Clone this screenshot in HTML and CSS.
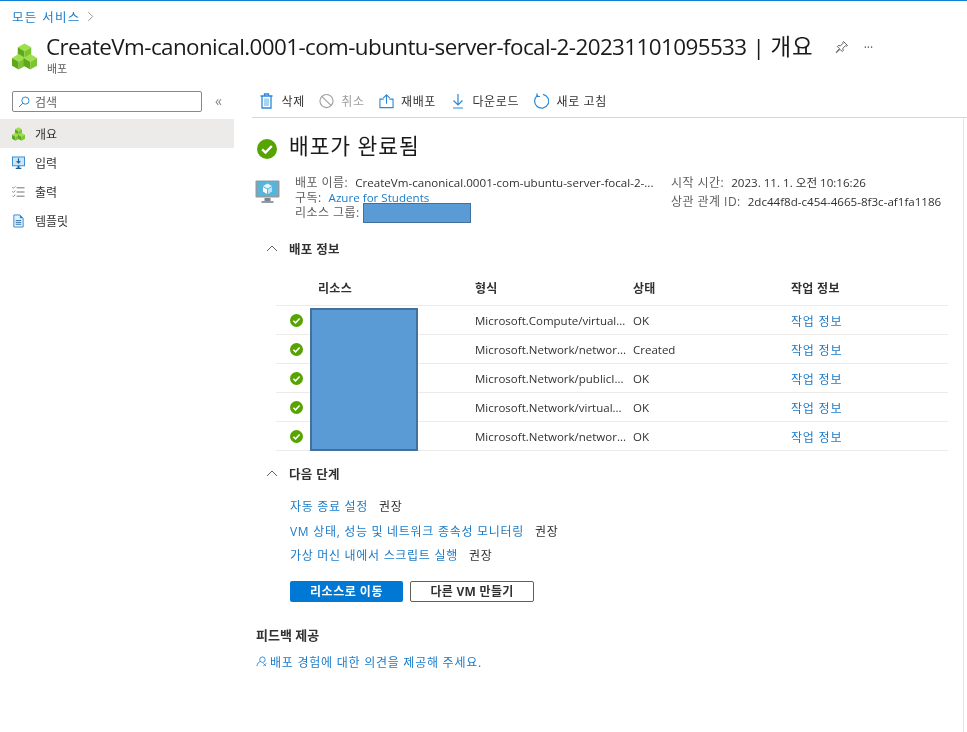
FILE: index.html
```html
<!DOCTYPE html>
<html lang="ko">
<head>
<meta charset="utf-8">
<title>배포 개요</title>
<link rel="stylesheet" href="styles.css">
</head>
<body>
<svg class="defs" width="0" height="0" aria-hidden="true">
  <defs>
    <g id="cube">
      <polygon points="7,0 14,4 7,8 0,4" fill="#9ee04a"/>
      <polygon points="0,4 7,8 7,16 0,12" fill="#5fa81c"/>
      <polygon points="14,4 7,8 7,16 14,12" fill="#7cc52f"/>
    </g>
    <g id="cubes">
      <use href="#cube" x="6"/>
      <use href="#cube" x="0" y="11"/>
      <use href="#cube" x="12" y="11"/>
    </g>
    <g id="ok">
      <circle cx="10" cy="10" r="10" fill="#57a300"/>
      <path d="M5.2 10.4l3.3 3.2 6.3-6.6" fill="none" stroke="#fff" stroke-width="2.4"/>
    </g>
  </defs>
</svg>
<div class="page">
  <header class="head">
    <nav class="crumbs"><a class="link">모든 서비스</a>
      <svg class="crumb-sep" viewBox="0 0 8 12"><path d="M1.5 1l5 5-5 5" fill="none" stroke="#8a8886"/></svg>
    </nav>
    <div class="titlebar">
      <svg class="title-icon" viewBox="0 0 26 27"><use href="#cubes"/></svg>
      <div class="title-text">
        <div class="title-row">
          <h1 class="title"><span class="title-name">CreateVm-canonical.0001-com-ubuntu-server-focal-2-20231101095533</span> | <span class="title-ko">개요</span></h1>
          <svg class="pin" viewBox="0 0 14 14"><path d="M8.5 1.5l4 4-1 .6-1-.4-2.6 2.6.3 2.2-1 1-2.200-2.200-3.300 3.300-.6-.2 3.300-3.800L2.300 6.500l1-1 2.200.3 2.600-2.600-.3-1z" fill="none" stroke="#605e5c"/></svg>
          <span class="more">···</span>
        </div>
        <div class="subtitle">배포</div>
      </div>
    </div>
  </header>
  <div class="shell">
    <aside class="side">
      <div class="search-row">
        <div class="search">
          <svg class="search-icon" viewBox="0 0 12 12"><circle cx="7.4" cy="4.6" r="3.6" fill="none" stroke="#2b88d8"/><path d="M4.8 7.2L1 11" stroke="#2b88d8"/></svg>
          <span>검색</span>
        </div>
        <span class="collapse">«</span>
      </div>
      <ul class="menu">
        <li class="menu-item active">
          <svg class="menu-icon" viewBox="0 0 26 27"><use href="#cubes"/></svg>개요</li>
        <li class="menu-item">
          <svg class="menu-icon" viewBox="0 0 14 14"><rect x="0.5" y="0.5" width="13" height="9.5" fill="#cde6f7" stroke="#2b88d8"/><path d="M7 2v5M5 5l2 2 2-2" fill="none" stroke="#1b5e95" stroke-width="1.2"/><path d="M6 10h2v2h2v1.5H4V12h2z" fill="#1b5e95"/></svg>입력</li>
        <li class="menu-item">
          <svg class="menu-icon" viewBox="0 0 14 14"><path d="M0.5 2l1 1 2-2M0.5 6.5l1 1 2-2M0.5 11l1 1 2-2" fill="none" stroke="#2b88d8"/><path d="M5 2.5h8.5M5 7h8.500M5 11.500h8.500" stroke="#6b6967"/></svg>출력</li>
        <li class="menu-item">
          <svg class="menu-icon" viewBox="0 0 14 14"><path d="M2 .5h6.500L12 4v9.500H2z" fill="#e3f1fb" stroke="#2b88d8"/><path d="M8.500.5V4H12z" fill="#2b88d8"/><path d="M4 6.500h6M4 8.500h6M4 10.500h6" stroke="#2b6ea8"/></svg>템플릿</li>
      </ul>
    </aside>
    <main class="main">
      <div class="toolbar">
        <span class="tool"><svg class="tool-icon" viewBox="0 0 14 16"><path d="M1 3h12M5 3V1h4v2M2.500 3v12h9V3" fill="none" stroke="#2b88d8" stroke-width="1.3"/><rect x="4.500" y="5.500" width="5" height="7.500" fill="#a9d3f2"/></svg>삭제</span>
        <span class="tool disabled"><svg class="tool-icon" viewBox="0 0 16 16"><circle cx="8" cy="8" r="7" fill="none" stroke="#a19f9d" stroke-width="1.2"/><path d="M3 3l10 10" stroke="#a19f9d" stroke-width="1.2"/></svg>취소</span>
        <span class="tool"><svg class="tool-icon" viewBox="0 0 16 16"><path d="M8 11V1.500M4.500 5L8 1.500 11.500 5" fill="none" stroke="#2b88d8" stroke-width="1.2"/><path d="M5 6H1v9h14V6h-4" fill="none" stroke="#2b88d8" stroke-width="1.2"/></svg>재배포</span>
        <span class="tool"><svg class="tool-icon narrow" viewBox="0 0 12 16"><path d="M6 1v11M1.500 7.500L6 12l4.500-4.500M1 15h10" fill="none" stroke="#2b88d8" stroke-width="1.200"/></svg>다운로드</span>
        <span class="tool"><svg class="tool-icon wide" viewBox="0 0 16 16"><path d="M5 2.200A7 7 0 1 0 10 1.300" fill="none" stroke="#2b88d8" stroke-width="1.200"/><path d="M4 0.500v3h3" fill="none" stroke="#2b88d8" stroke-width="1.200"/></svg>새로 고침</span>
      </div>
      <div class="content">
        <div class="status">
          <svg class="status-icon" viewBox="0 0 20 20"><use href="#ok"/></svg>
          <h2 class="status-title">배포가 완료됨</h2>
        </div>
        <div class="summary">
          <svg class="vm-icon" viewBox="0 0 25 24">
            <rect x="0.500" y="0.500" width="24" height="17" rx="1" fill="#8f9ba3"/>
            <rect x="2" y="2" width="21" height="14" fill="#59b4d9"/>
            <polygon points="12.500,3.500 17,6 12.500,8.500 8,6" fill="#e6f5fb"/>
            <polygon points="8,7 12,9.300 12,14 8,11.500" fill="#fff"/>
            <polygon points="17,7 13,9.300 13,14 17,11.500" fill="#bfe4f3"/>
            <rect x="9.500" y="18" width="6" height="3" fill="#7a868d"/>
            <rect x="6.500" y="21" width="12" height="2" fill="#8f9ba3"/>
          </svg>
          <dl class="facts">
            <div class="fact"><dt>배포 이름:</dt><dd>CreateVm-canonical.0001-com-ubuntu-server-focal-2-...</dd></div>
            <div class="fact"><dt>구독:</dt><dd><a class="link">Azure for Students</a></dd></div>
            <div class="fact"><dt>리소스 그룹:</dt><dd><span class="redact redact-group"></span></dd></div>
          </dl>
          <dl class="facts facts-right">
            <div class="fact"><dt>시작 시간:</dt><dd>2023. 11. 1. 오전 10:16:26</dd></div>
            <div class="fact"><dt>상관 관계 ID:</dt><dd>2dc44f8d-c454-4665-8f3c-af1fa1186</dd></div>
          </dl>
        </div>
        <section class="details">
          <h3 class="section-head"><svg class="chev" viewBox="0 0 12 7"><path d="M1 6l5-5 5 5" fill="none" stroke="#605e5c"/></svg>배포 정보</h3>
          <div class="table">
            <span class="redact redact-table"></span>
            <div class="row row-head"><span></span><span class="cell-name">리소스</span><span>형식</span><span>상태</span><span>작업 정보</span></div>
            <div class="row"><svg class="row-ok" viewBox="0 0 20 20"><use href="#ok"/></svg><span></span><span>Microsoft.Compute/virtual...</span><span>OK</span><a class="link row-link">작업 정보</a></div>
            <div class="row"><svg class="row-ok" viewBox="0 0 20 20"><use href="#ok"/></svg><span></span><span>Microsoft.Network/networ...</span><span>Created</span><a class="link row-link">작업 정보</a></div>
            <div class="row"><svg class="row-ok" viewBox="0 0 20 20"><use href="#ok"/></svg><span></span><span>Microsoft.Network/publicI...</span><span>OK</span><a class="link row-link">작업 정보</a></div>
            <div class="row"><svg class="row-ok" viewBox="0 0 20 20"><use href="#ok"/></svg><span></span><span>Microsoft.Network/virtual...</span><span>OK</span><a class="link row-link">작업 정보</a></div>
            <div class="row"><svg class="row-ok" viewBox="0 0 20 20"><use href="#ok"/></svg><span></span><span>Microsoft.Network/networ...</span><span>OK</span><a class="link row-link">작업 정보</a></div>
          </div>
        </section>
        <section class="next">
          <h3 class="section-head"><svg class="chev" viewBox="0 0 12 7"><path d="M1 6l5-5 5 5" fill="none" stroke="#605e5c"/></svg>다음 단계</h3>
          <ul class="steps">
            <li class="step"><a class="link">자동 종료 설정</a><span>권장</span></li>
            <li class="step"><a class="link">VM 상태, 성능 및 네트워크 종속성 모니터링</a><span>권장</span></li>
            <li class="step"><a class="link">가상 머신 내에서 스크립트 실행</a><span>권장</span></li>
          </ul>
          <div class="actions">
            <button class="btn btn-primary">리소스로 이동</button>
            <button class="btn btn-outline">다른 VM 만들기</button>
          </div>
        </section>
        <section class="feedback">
          <h3 class="feedback-title">피드백 제공</h3>
          <a class="link feedback-link"><svg class="feedback-icon" viewBox="0 0 12 12"><circle cx="7" cy="4" r="3" fill="none" stroke="#2b88d8"/><path d="M1 11c.5-3 2-4.500 4-5M8 8l3 3M11 8l-3 3" fill="none" stroke="#2b88d8"/></svg>배포 경험에 대한 의견을 제공해 주세요.</a>
        </section>
      </div>
    </main>
  </div>
</div>
</body>
</html>
```

FILE: styles.css
```css
* { box-sizing: border-box; }
html, body { margin: 0; padding: 0; background: #fff; }
body {
  font-family: "Open Sans", "Noto Sans CJK KR", sans-serif;
  font-size: 11px;
  color: #323130;
  overflow: hidden;
}
.defs { position: absolute; }
.page { width: 967px; height: 732px; border-top: 1px solid #0f80d8; overflow: hidden; filter: blur(.3px); }
.link { color: #1a7bca; text-decoration: none; }
.head { height: 87px; padding-left: 12px; }
.crumbs { display: flex; align-items: center; gap: 6px; height: 31px; font-size: 12.500px; letter-spacing: 1.300px; }
.crumb-sep { width: 7px; height: 11px; }
.titlebar { display: flex; gap: 9px; }
.title-icon { width: 25px; height: 27px; margin-top: 11px; flex: none; }
.title-row { display: flex; align-items: center; height: 30px; }
.title { margin: 0; font-size: 22.400px; font-weight: 400; color: #1b1a19; line-height: 30px; white-space: nowrap; }
.title-name { letter-spacing: -.58px; }
.title-ko { letter-spacing: 1px; }
.pin { width: 14px; height: 14px; margin-left: 21px; }
.more { margin-left: 15px; font-size: 12px; color: #605e5c; }
.subtitle { margin-left: 1px; font-size: 11px; color: #605e5c; line-height: 14px; }

.shell { display: flex; height: 644px; }
.side { width: 250px; flex: none; }
.search-row { display: flex; align-items: flex-start; padding: 3px 0 0 12px; height: 31px; }
.search { display: flex; align-items: center; gap: 5px; width: 190px; height: 21px; border: 1px solid #8a8886; border-radius: 2px; padding-left: 5px; font-size: 12px; color: #605e5c; }
.search-icon { width: 12px; height: 12px; }
.collapse { margin-left: 13px; font-size: 14px; color: #8a8886; line-height: 20px; }
.menu { list-style: none; margin: 0; padding: 0; width: 234px; }
.menu-item { display: flex; align-items: center; gap: 10px; height: 29px; padding-left: 12px; font-size: 12px; color: #323130; }
.menu-item.active { background: #edebe9; }
.menu-icon { width: 13px; height: 14px; flex: none; }

.main { flex: 1; min-width: 0; }
.toolbar { display: flex; align-items: center; gap: 14px; height: 30px; margin-left: 2px; padding: 0 0 4px 7px; border-bottom: 1px solid #d8d6d4; font-size: 12px; letter-spacing: .6px; }
.tool { display: inline-flex; align-items: center; gap: 7.500px; color: #323130; }
.tool.disabled { color: #a19f9d; }
.tool-icon { width: 15px; height: 16px; flex: none; }
.tool-icon.narrow { width: 12px; margin: 0 1px 0 2px; }
.tool-icon.wide { width: 16px; }

.content { height: 614px; margin-right: 3px; border-right: 1px solid #e6e6e6; padding: 13px 0 0 7px; }
.status { display: flex; align-items: center; gap: 12px; height: 33px; }
.status-icon { width: 20px; height: 20px; margin-top: 3px; }
.status-title { margin: 0 0 4px; font-size: 21.500px; font-weight: 400; color: #1b1a19; letter-spacing: .9px; line-height: 30px; }
.summary { display: flex; height: 62px; margin-top: 11px; }
.vm-icon { width: 25px; height: 24px; margin: 5px 15px 0 -2px; flex: none; }
.facts { margin: 0; width: 376px; line-height: 15px; font-size: 11.600px; }
.facts-right { line-height: 19px; width: auto; margin-top: -2px; }
.fact { display: flex; gap: 7px; white-space: nowrap; }
.fact dt { color: #605e5c; font-size: 12px; letter-spacing: .45px; }
.fact dd { margin: 0; position: relative; }
.redact { display: block; position: absolute; background: #5b9bd5; border: 1px solid #41719c; }
.redact-group { left: -4px; top: -2px; width: 108px; height: 20px; }

.section-head { display: flex; align-items: center; gap: 11px; margin: 0; height: 24px; padding: 0 0 2px 9px; font-size: 12.500px; letter-spacing: .3px; font-weight: 700; color: #323130; }
.chev { width: 12px; height: 7px; }
.table { position: relative; margin: 12px 15px 0 19px; font-size: 11.500px; }
.redact-table { left: 34px; top: 35px; width: 108px; height: 143px; border-width: 2px; }
.row { display: grid; grid-template-columns: 34px 165px 158px 158px 1fr; align-items: center; height: 29px; border-bottom: 1px solid #edebe9; }
.row-head { height: 33px; padding-bottom: 3px; font-weight: 700; font-size: 12px; letter-spacing: .3px; }
.row-head .cell-name { padding-left: 8px; }
.row-ok { width: 13px; height: 13px; margin-left: 14px; }
.row-link { margin-top: 1px; font-size: 12px; letter-spacing: .8px; }
.next { margin-top: 11px; }
.steps { list-style: none; margin: 8px 0 0; padding: 0 0 0 33px; }
.step { display: flex; gap: 11px; height: 24.500px; align-items: center; font-size: 12px; letter-spacing: .7px; }
.actions { display: flex; gap: 7px; margin: 13px 0 0 33px; }
.btn { height: 21px; font: 700 12px "Open Sans", "Noto Sans CJK KR", sans-serif; border-radius: 2px; padding: 0; }
.btn-primary { width: 113px; border: 0; background: #0078d4; color: #fff; letter-spacing: .5px; }
.btn-outline { width: 124px; background: #fff; border: 1px solid #605e5c; color: #323130; letter-spacing: .3px; }
.feedback { margin: 25px 0 0 -1px; }
.feedback-title { margin: 0; font-size: 13px; font-weight: 700; line-height: 16px; }
.feedback-link { display: flex; align-items: center; gap: 3px; margin-top: 10px; font-size: 12px; letter-spacing: .75px; }
.feedback-icon { width: 11px; height: 11px; }
```
